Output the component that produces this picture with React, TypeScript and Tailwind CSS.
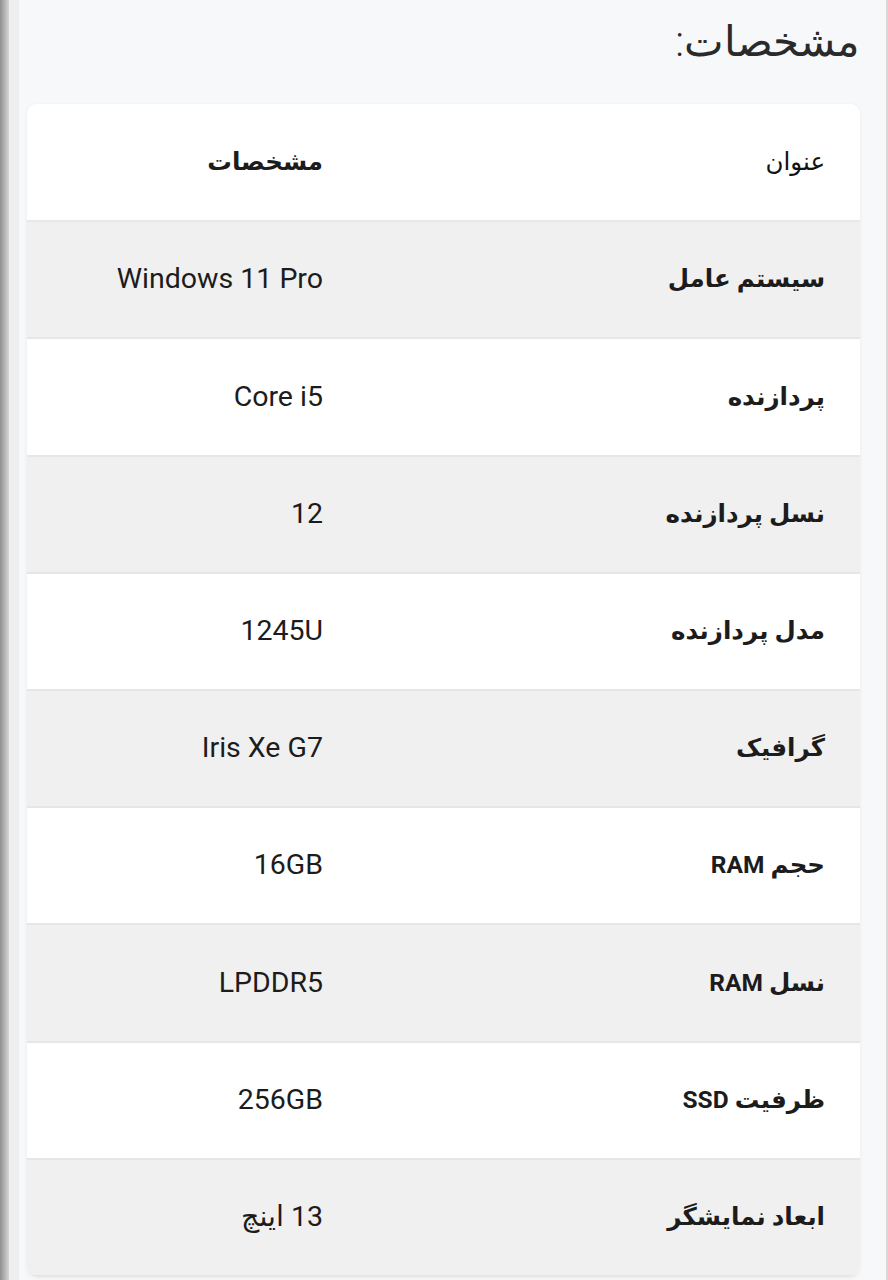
const rows = [
  { label: "سیستم عامل", value: "Windows 11 Pro" },
  { label: "پردازنده", value: "Core i5" },
  { label: "نسل پردازنده", value: "12" },
  { label: "مدل پردازنده", value: "1245U" },
  { label: "گرافیک", value: "Iris Xe G7" },
  { label: "حجم RAM", value: "16GB" },
  { label: "نسل RAM", value: "LPDDR5" },
  { label: "ظرفیت SSD", value: "256GB" },
  { label: "ابعاد نمایشگر", value: "13 اینچ" },
]

export default function App() {
  return (
    <div
      className="flex min-h-[1280px] w-[888px] bg-[#f7f8f9] text-[#1c1c1c]"
      style={{ fontFamily: "Roboto, 'DejaVu Sans', sans-serif" }}
    >
      <div className="w-[9px] shrink-0 bg-gradient-to-r from-[#8f8f8f] to-[#d6d6d6]" />
      <div className="w-[10px] shrink-0 bg-[#eceef0]" />
      <div dir="rtl" className="flex-1 pl-[8px] pr-[26px]">
        <h2 className="pt-[12px] pb-[32px] text-[42px] leading-[60px] font-light text-[#2a2a2a]">
          مشخصات:
        </h2>
        <div className="overflow-hidden rounded-[10px] bg-white shadow-[0_1px_4px_rgba(0,0,0,0.06)]">
          <table className="w-full border-collapse">
            <thead>
              <tr className="h-[117.2px] border-b-2 border-[#e8e8e8] bg-white">
                <th className="w-[502px] pr-[35px] text-right text-[24.5px] font-normal text-[#111]">عنوان</th>
                <th className="pr-[35px] text-right text-[24.5px] font-bold">مشخصات</th>
              </tr>
            </thead>
            <tbody>
              {rows.map((row, i) => (
                <tr
                  key={row.label}
                  className={`h-[117.2px] border-b-2 border-[#e6e6e6] ${i % 2 === 0 ? "bg-[#f0f0f0]" : "bg-white"}`}
                >
                  <td className="pr-[35px] text-right text-[24.5px] font-bold">{row.label}</td>
                  <td className="pr-[35px] text-right text-[28.5px]">{row.value}</td>
                </tr>
              ))}
            </tbody>
          </table>
        </div>
      </div>
      <div className="w-[2px] shrink-0 bg-[#d8d8d8]" />
    </div>
  )
}
